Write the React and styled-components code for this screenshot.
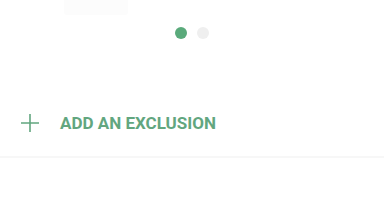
import React from 'react'
import styled, { createGlobalStyle } from 'styled-components'

const Global = createGlobalStyle`
  html, body {
    margin: 0;
    padding: 0;
    background: #ffffff;
    font-family: Roboto, "Liberation Sans", sans-serif;
  }
`

const Screen = styled.div`
  width: 384px;
  height: 216px;
  overflow: hidden;
  display: flex;
  flex-direction: column;
`

const CardStub = styled.div`
  margin-left: 64px;
  width: 64px;
  height: 15px;
  background: #fcfcfc;
  border-radius: 0 0 3px 3px;
`

const Pager = styled.div`
  display: flex;
  justify-content: center;
  gap: 10px;
  margin-top: 12px;
`

const Dot = styled.span`
  width: 12px;
  height: 12px;
  border-radius: 50%;
  background: ${p => (p.$active ? '#5aaa7b' : '#efefef')};
`

const AddRow = styled.button`
  margin-top: 72px;
  display: flex;
  align-items: center;
  gap: 20px;
  padding: 0 0 0 20px;
  height: 24px;
  border: none;
  background: transparent;
  cursor: pointer;
  text-align: left;
`

const Label = styled.span`
  font-family: Roboto, "Liberation Sans", sans-serif;
  font-size: 17px;
  font-weight: 700;
  color: #62a67f;
  letter-spacing: 0;
`

const Divider = styled.div`
  margin-top: 21px;
  height: 2px;
  background: #f7f7f7;
`

function PlusIcon() {
  return (
    <svg width="20" height="20" viewBox="0 0 20 20">
      <path d="M10 1v18M1 10h18" stroke="#62a67f" strokeWidth="1.6" fill="none" />
    </svg>
  )
}

export default function App() {
  return (
    <Screen>
      <Global />
      <CardStub />
      <Pager>
        <Dot $active />
        <Dot />
      </Pager>
      <AddRow>
        <PlusIcon />
        <Label>ADD AN EXCLUSION</Label>
      </AddRow>
      <Divider />
    </Screen>
  )
}
